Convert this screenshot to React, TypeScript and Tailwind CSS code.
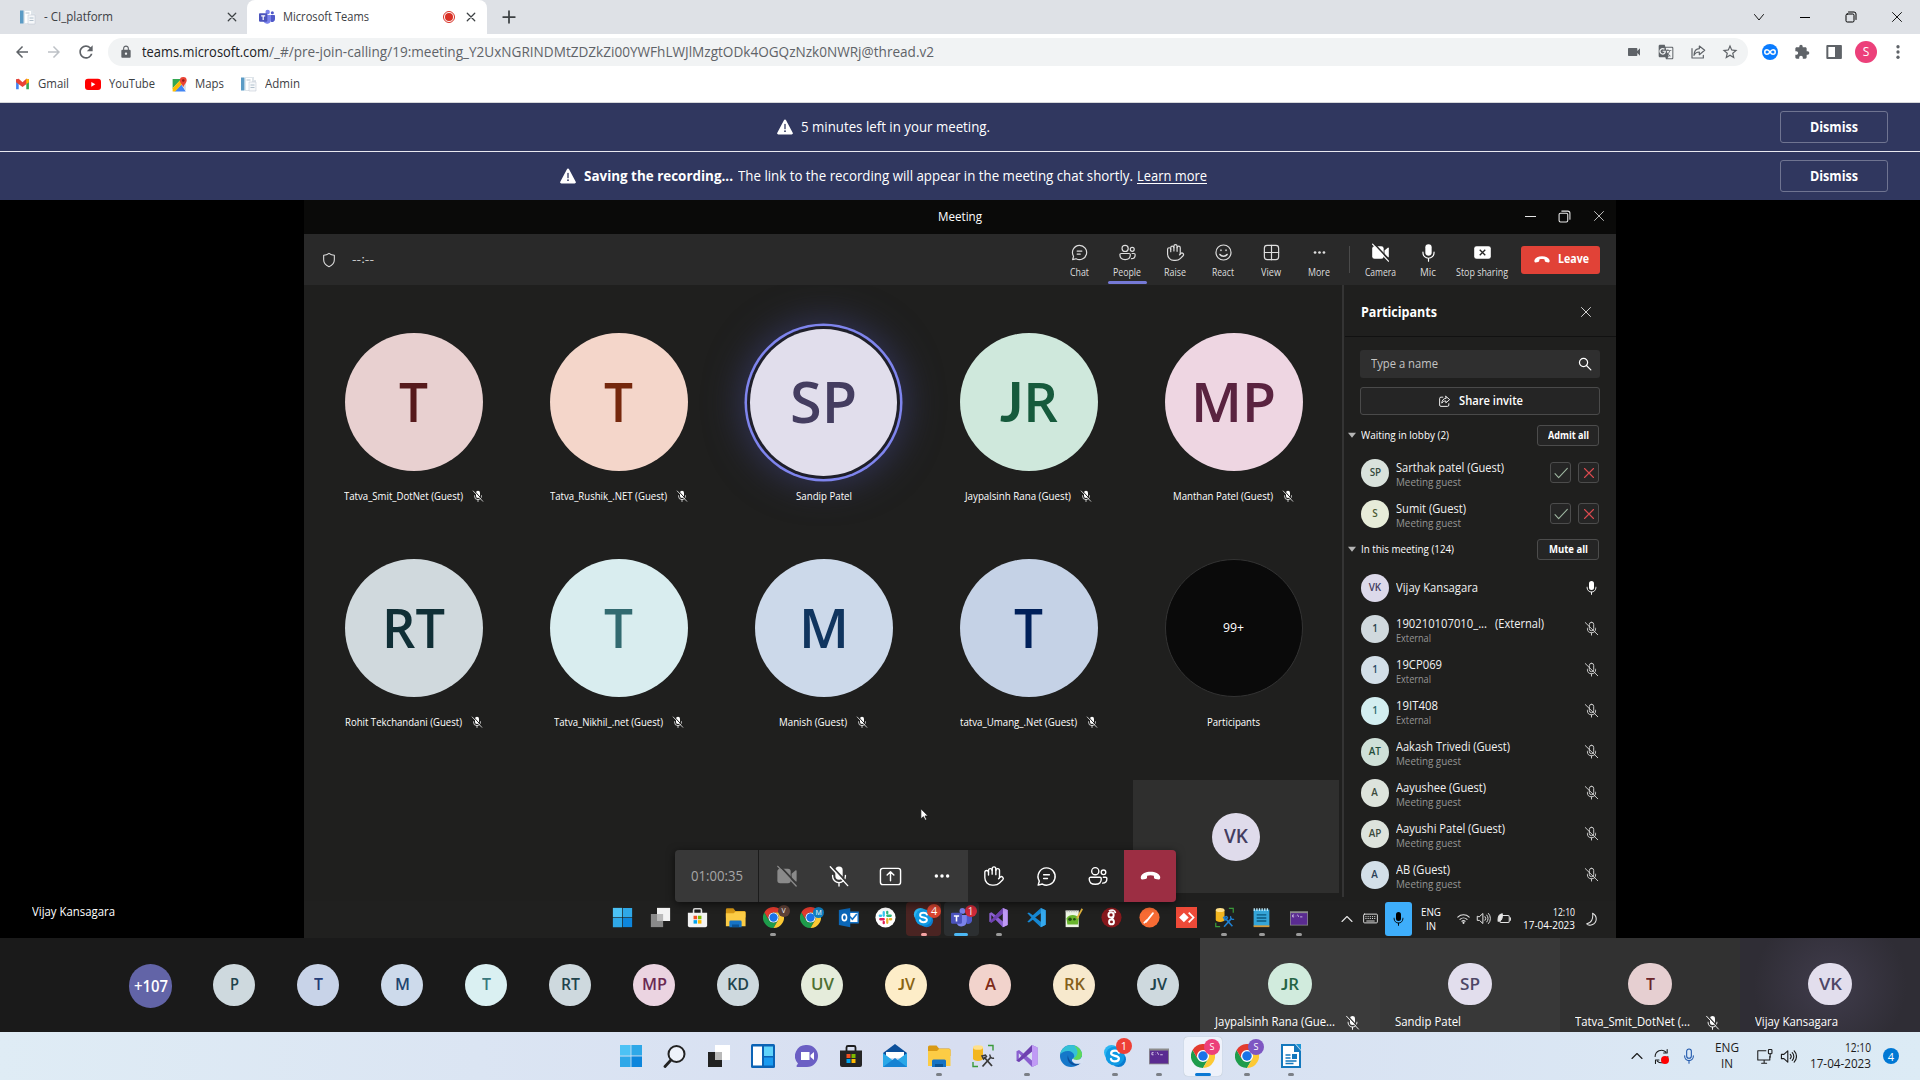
import React, { useLayoutEffect, useRef, useState } from "react";
import { Hand } from "lucide-react";
import { MdExtension, MdGTranslate, MdStarBorder, MdVideocam, MdLock, MdRefresh, MdArrowBack, MdArrowForward } from "react-icons/md";

type Kids = { children?: React.ReactNode; className?: string };

/* One line of text condensed or widened to a known width. */
function Fit({ w, className = "", children }: Kids & { w: number }) {
  const ref = useRef<HTMLSpanElement>(null);
  const [scale, setScale] = useState(1);
  useLayoutEffect(() => {
    if (ref.current) setScale(w / ref.current.getBoundingClientRect().width);
  }, []);
  return (
    <span className={`inline-flex shrink-0 ${className}`} style={{ width: w }}>
      <span ref={ref} className="shrink-0 origin-left whitespace-pre" style={{ transform: `scaleX(${scale})` }}>
        {children}
      </span>
    </span>
  );
}

/* Avatar initials; the J comes from a face whose J stays on the baseline. */
function Initials({ w, t, className = "" }: { w: number; t: string; className?: string }) {
  return (
    <Fit w={w} className={className}>
      {t.startsWith("J") ? <><span className="font-['Lato',sans-serif] font-bold">J</span>{t.slice(1)}</> : t}
    </Fit>
  );
}

function Line({ className = "size-5", sw = 1.5, children }: Kids & { sw?: number }) {
  return (
    <svg viewBox="0 0 24 24" className={`shrink-0 ${className}`} fill="none" stroke="currentColor" strokeWidth={sw} strokeLinecap="round" strokeLinejoin="round">
      {children}
    </svg>
  );
}
function Solid({ className = "size-5", vb = "0 0 24 24", children }: Kids & { vb?: string }) {
  return (
    <svg viewBox={vb} className={`shrink-0 ${className}`} fill="currentColor">
      {children}
    </svg>
  );
}

/* ---------- glyphs ---------- */
const Cross = ({ className = "size-3", sw = 1.6 }: { className?: string; sw?: number }) => (
  <Line className={className} sw={sw}><path d="M3 3l18 18M21 3L3 21" /></Line>
);
const Restore = ({ className = "size-3" }: { className?: string }) => (
  <Line className={className} sw={2}><rect x="2" y="6" width="16" height="16" rx="2.5" /><path d="M7 2h11a4 4 0 0 1 4 4v11" /></Line>
);
const ChatIcon = ({ className }: { className?: string }) => (
  <Line className={className}><path d="M12 3a9 9 0 1 1-4.3 16.9L3.3 21l1.2-4.3A9 9 0 0 1 12 3z" /><path d="M9 10.2h6M9 14h4" /></Line>
);
const PeopleIcon = ({ className }: { className?: string }) => (
  <Line className={className}>
    <circle cx="9" cy="6.8" r="3.9" /><circle cx="18" cy="8" r="2.5" />
    <path d="M4 13.3h10a1.6 1.6 0 0 1 1.6 1.6c0 4-2.6 6.1-6.6 6.1s-6.6-2.1-6.6-6.1A1.6 1.6 0 0 1 4 13.3z" />
    <path d="M17.8 13.3h2.4a1.5 1.5 0 0 1 1.5 1.5c0 3.2-1.7 5-4.7 5" />
  </Line>
);
const HandIcon = ({ className = "" }: { className?: string }) => <Hand className={`-scale-x-100 shrink-0 ${className}`} strokeWidth={1.5} />;
const MicIcon = ({ className }: { className?: string }) => (
  <Solid className={className}>
    <rect x="8" y="1.5" width="8" height="14.5" rx="4" />
    <path d="M5 11.5v.8a7 7 0 0 0 14 0v-.8M12 19.3V23" fill="none" stroke="currentColor" strokeWidth="1.5" strokeLinecap="round" />
  </Solid>
);
const MicOff = ({ className, line = "#1f1f1e" }: { className?: string; line?: string }) => (
  <Solid className={className}>
    <rect x="8" y="1.5" width="8" height="14.5" rx="4" />
    <path d="M5 11.5v.8a7 7 0 0 0 14 0v-.8M12 19.3V23" fill="none" stroke="currentColor" strokeWidth="1.5" strokeLinecap="round" />
    <path d="M4 1.2L22.5 21" stroke={line} strokeWidth="2" />
    <path d="M2.5 2L21.5 22.5" stroke="currentColor" strokeWidth="1.5" strokeLinecap="round" />
  </Solid>
);
const MicOffLine = ({ className }: { className?: string }) => (
  <Line className={className} sw={1.5}>
    <rect x="8.5" y="2" width="7" height="13.5" rx="3.5" /><path d="M5.5 11.5v.8a6.5 6.5 0 0 0 13 0v-.8M12 19v3.5M2 2.5l20 19.5" />
  </Line>
);
const CamOff = ({ className, line }: { className?: string; line: string }) => (
  <Solid className={className}>
    <rect x="1.5" y="4" width="14.5" height="16" rx="3" /><path d="M17 9.5l4.2-3.6c.6-.5 1.3-.1 1.3.6v11c0 .7-.7 1.1-1.3.6L17 14.5z" />
    <path d="M3.8.8L23.8 22" stroke={line} strokeWidth="2" /><path d="M2 1.5L22 23" stroke="currentColor" strokeWidth="1.5" strokeLinecap="round" />
  </Solid>
);
const HangUp = ({ className }: { className?: string }) => (
  <Solid className={className}><path d="M12 7c5 0 9 1.8 10 5 .5 1.7-.1 3.5-1.6 3.2l-3.2-.5c-1-.2-1.5-.9-1.6-1.9l-.1-1.5c-2.2-.7-4.8-.7-7 0l-.1 1.5c-.1 1-.6 1.700-1.600 1.900l-3.200.5C2.100 15.500 1.500 13.700 2 12c1-3.200 5-5 10-5z" /></Solid>
);
const Dots = ({ className }: { className?: string }) => (
  <Solid className={className}><circle cx="4.5" cy="12" r="2.3" /><circle cx="12" cy="12" r="2.3" /><circle cx="19.5" cy="12" r="2.3" /></Solid>
);
const ShareIcon = ({ className }: { className?: string }) => (
  <Line className={className} sw={1.7}>
    <path d="M9 4H5.500A2.500 2.500 0 0 0 3 6.500v12A2.500 2.500 0 0 0 5.500 21h12a2.500 2.500 0 0 0 2.500-2.500V16" />
    <path d="M14.500 2.500l7 6-7 6V11c-3.500 0-5.500 1-7.500 4 .3-5 3-8.500 7.500-9z" />
  </Line>
);
const Warning = () => (
  <Solid className="size-4" vb="0 0 16 16">
    <path d="M8 .6c.5 0 .9.3 1.200.8l6.500 12.300c.5.900-.1 1.800-1.100 1.800H1.400c-1 0-1.600-.9-1.100-1.800L6.800 1.400C7.100.9 7.500.6 8 .6z" />
    <path d="M8 5.500v4.200" stroke="#30375f" strokeWidth="1.3" strokeLinecap="round" /><circle cx="8" cy="12.200" r=".9" fill="#30375f" />
  </Solid>
);
const Speaker = ({ className }: { className?: string }) => (
  <Line className={className} sw={1.6}><path d="M2 9v6h3.500L11 20V4L5.500 9zM14.500 9a4.500 4.500 0 0 1 0 6M17.300 6.500a8 8 0 0 1 0 11M20 4a11.500 11.500 0 0 1 0 16" /></Line>
);
const Chevron = ({ className }: { className?: string }) => <Line className={className} sw={2.2}><path d="M2 17L12 7l10 10" /></Line>;

/* ---------- app logos ---------- */
const WinLogo = ({ className }: { className?: string }) => (
  <Solid className={className}>
    <path fill="#4cc2f5" d="M1 1h10.600v10.600H1z" /><path fill="#2fa8e8" d="M12.400 1H23v10.600H12.400zM1 12.400h10.600V23H1z" /><path fill="#0d86dc" d="M12.400 12.400H23V23H12.400z" />
  </Solid>
);
const ChromeLogo = ({ className }: { className?: string }) => (
  <Solid className={className} vb="0 0 48 48">
    <circle cx="24" cy="24" r="12" fill="#fff" />
    <path fill="#1e9c4b" d="M13.600 30L3.200 12A24 24 0 0 0 24 48l10.400-18a12 12 0 0 1-20.800 0z" />
    <path fill="#fcc934" d="M34.400 30L24 48a24 24 0 0 0 20.800-36H24a12 12 0 0 1 10.400 18z" />
    <path fill="#e33b2e" d="M24 12h20.800a24 24 0 0 0-41.600 0l10.400 18A12 12 0 0 1 24 12z" />
    <circle cx="24" cy="24" r="9.500" fill="#1a73e8" />
  </Solid>
);
const TaskView = ({ dark, className }: { dark?: boolean; className?: string }) => (
  <Solid className={className}>
    <path fill={dark ? "#222" : "#8a8a8a"} d="M1 8h14v15H1z" /><path fill={dark ? "#fff" : "#f2f2f2"} d="M8 1h15v15H8z" /><path fill="#b9b9b9" d="M8 8h7v8H8z" />
  </Solid>
);
const StoreLogo = ({ dark, className }: { dark?: boolean; className?: string }) => (
  <Solid className={className}>
    <path d="M7.500 7V3.500A1.500 1.500 0 0 1 9 2h6a1.500 1.500 0 0 1 1.500 1.500V7" fill="none" stroke={dark ? "#1d1d1d" : "#e8e8e8"} strokeWidth="1.8" />
    <path d="M1 6.500h22V21a2 2 0 0 1-2 2H3a2 2 0 0 1-2-2z" fill={dark ? "#252525" : "#f3f3f3"} />
    <path fill="#f25022" d="M7.500 10h4v4h-4z" /><path fill="#7fba00" d="M12.500 10h4v4h-4z" /><path fill="#00a4ef" d="M7.500 15h4v4h-4z" /><path fill="#ffb900" d="M12.500 15h4v4h-4z" />
  </Solid>
);
const FolderLogo = ({ className }: { className?: string }) => (
  <Solid className={className}>
    <path fill="#d99a15" d="M1 3a1.500 1.500 0 0 1 1.500-1.500h7L12 4.500h10A1.500 1.500 0 0 1 23.500 6v6H1z" />
    <path fill="#fccc45" d="M1 7h9l2-2h10a1.500 1.500 0 0 1 1.500 1.500V22H1z" /><path fill="#1673c4" d="M5 17a1.500 1.500 0 0 1 1.500-1.500h11A1.500 1.500 0 0 1 19 17v6H5z" /><path fill="#0b5394" d="M8 20h8v3H8z" />
  </Solid>
);
const SkypeLogo = ({ className }: { className?: string }) => (
  <Solid className={className}>
    <circle cx="8.500" cy="8.500" r="7.500" fill="#2cb6f2" /><circle cx="15.500" cy="15.500" r="7.500" fill="#0a7ccf" /><circle cx="12" cy="12" r="9.500" fill="#0f9ae4" />
    <path d="M16 8.700C15.300 7.200 13.800 6.600 12 6.600c-2.200 0-3.900 1-3.900 2.700 0 3.600 7.800 1.600 7.800 5.300 0 1.800-1.800 2.800-4 2.800-2 0-3.500-.8-4-2.400" fill="none" stroke="#fff" strokeWidth="2.200" strokeLinecap="round" />
  </Solid>
);
const TeamsLogo = ({ className }: { className?: string }) => (
  <Solid className={className}>
    <circle cx="13" cy="4.500" r="3.300" fill="#7b83eb" /><circle cx="20" cy="5.500" r="2.300" fill="#5059c9" />
    <path fill="#5059c9" d="M16 9h7a1 1 0 0 1 1 1v5a4.500 4.500 0 0 1-6 4.200z" /><path fill="#7b83eb" d="M7 9h11v7.500a6 6 0 0 1-11.500 2z" />
    <rect x="0" y="6.500" width="12.500" height="12.500" rx="1.200" fill="#4b53bc" /><path fill="none" stroke="#fff" strokeWidth="1.800" d="M3.300 10.200h6M6.300 10.200v6.300" />
  </Solid>
);
const VsLogo = ({ className }: { className?: string }) => (
  <Solid className={className}>
    <path fill="#8a5fd0" fillRule="evenodd" d="M17 1L8.600 9.400 4 6 1.500 7.200v9.600L4 18l4.600-3.400L17 23l5.500-2.400V3.400zM17 7.400v9.200L11.600 12zM3.800 9.200v5.600L6.500 12z" />
    <path fill="#c09af5" d="M17 1l5.500 2.400v17.200L17 23z" /><path fill="#5b2d9a" d="M1.500 16.800L4 18l4.600-3.400L17 7.400V1L8.600 9.400z" opacity=".6" />
  </Solid>
);
const CodeLogo = ({ className }: { className?: string }) => (
  <Solid className={className}>
    <path fill="#1687d2" fillRule="evenodd" d="M17 1L7.800 9.400 3.400 6.200 1.500 7.100 6.200 12l-4.700 4.900 1.900.9 4.400-3.200L17 23l5.500-2.600V3.600zM17 7.200v9.600L10.500 12z" /><path fill="#35a9ee" d="M17 1l5.500 2.600v16.800L17 23z" />
  </Solid>
);
const DbTools = ({ dark, className }: { dark?: boolean; className?: string }) => (
  <Solid className={className}>
    <path fill="#f3b61f" d="M2 3.500v11c0 1.500 2.200 2.500 5 2.500s5-1 5-2.500v-11z" /><ellipse cx="7" cy="3.500" rx="5" ry="2.300" fill="#ffe08a" />
    <path d="M17 1.500h5v5M2 18v4.500h5" stroke="#3a9a3a" strokeWidth="1.400" fill="none" />
    <path d="M13 13l8 9M20 13l-8.500 9.500" stroke={dark ? "#3a3a3a" : "#1f7fd0"} strokeWidth="1.800" fill="none" />
    <path d="M11 12l3.500-1 1 1.500-3 2.500zM19 10.500a3 3 0 0 0 4 3.500" stroke={dark ? "#3a3a3a" : "#1f7fd0"} strokeWidth="1.500" fill="none" />
  </Solid>
);
const Terminal = ({ className }: { className?: string }) => (
  <Solid className={className}><path fill="#8c8c8c" d="M0 3h24v19H0z" /><path fill="#5a2b91" d="M1 5.500h22V21H1z" /><path d="M5.500 8H3.500v2.500h2M8 8v.3M8 10v.3M10 7.500l1.500 3M13.500 10.500h3" stroke="#e9dff7" fill="none" /></Solid>
);
const EdgeLogo = ({ className }: { className?: string }) => (
  <Solid className={className}>
    <circle cx="12" cy="12" r="11" fill="#1577c9" />
    <path fill="#35c1d6" d="M1.200 10.500C2 5 6.500 1 12 1c6.500 0 11 4.500 11 9.500 0 3.500-2.500 5.500-5.500 5.500-2.200 0-3.300-.8-3.300-1.500 0-.6 1-.9 1-2.500C15.200 9 12 7 8.700 7 5.500 7 3 8.200 1.200 10.500z" />
    <path fill="#5fd85a" d="M15 1.500c5 1.500 8 5.300 8 9 0 3.500-2.500 5.500-5.500 5.500-2.200 0-3.300-.8-3.300-1.500C19.500 12 20 6 15 1.500z" />
    <path fill="#0c4f9c" d="M9 11c-2 5 2 10.500 7.500 10.500 2 0 4-.8 5-2.500-1.500 1-3 1.300-4.500 1-4-.5-8-4.500-8-9z" />
    <path fill="#d8e2f3" d="M14.200 14.500c0 .7 1.100 1.500 3.300 1.500 2.500 0 4.500-1.200 5.200-3.300L24 14v5l-2.500 0c-2 1.500-6 1-7.700-1-1.300-1.500-1-3 .4-3.500z" />
  </Solid>
);
const PageIcon = ({ className }: { className?: string }) => (
  <Solid className={className} vb="0 0 16 16">
    <path fill="#dfe5ea" d="M4 1h9v3h2v11H4z" /><path fill="#5b9bc5" d="M0 1.500h3.500v13H0z" /><path fill="#fff" d="M5 2h6v12H5z" /><path fill="#f6f8fa" stroke="#b9c3cc" strokeWidth=".5" d="M8 6h7v9H8z" /><path d="M9.500 9h4M9.500 11.500h4M5.500 4h4" stroke="#9fb0bf" strokeWidth=".8" />
  </Solid>
);

/* ---------- browser frame ---------- */
function Browser() {
  return (
    <header className="h-[103px] border-b border-[#d5d7da] bg-white text-[12.5px] text-[#3c4043]">
      <div className="flex h-[34px] items-center bg-[#dee1e6]">
        <div className="flex h-full w-[247px] items-center pl-5">
          <PageIcon className="size-4" />
          <Fit w={69} className="ml-2">- CI_platform</Fit>
          <Cross className="ml-[114px] size-2.5" sw={3} />
        </div>
        <div className="flex h-full w-[240px] items-center rounded-t-lg bg-white pl-3">
          <TeamsLogo className="size-4" />
          <Fit w={86} className="ml-2">Microsoft Teams</Fit>
          <span className="ml-[74px] flex size-3 items-center justify-center rounded-full border border-[#d93025]"><span className="size-2 rounded-full bg-[#d93025]" /></span>
          <Cross className="ml-[11px] size-2.5" sw={3} />
        </div>
        <Line className="ml-[15px] size-3.5" sw={3}><path d="M12 2v20M2 12h20" /></Line>
        <div className="ml-auto flex h-7 items-center text-black">
          <Line className="mr-[35px] size-3 rotate-180" sw={1.8}><path d="M3 17l9-11 9 11" /></Line>
          <span className="mr-[35px] h-px w-2.5 bg-black" />
          <Restore className="mr-[34px] size-3" />
          <Cross className="mr-[17px] size-3" sw={1.8} />
        </div>
      </div>
      <div className="flex h-9 items-center pl-[13px] text-[#5f6368]">
        <MdArrowBack className="size-[18px]" />
        <MdArrowForward className="ml-[14px] size-[18px] text-[#bdc1c6]" />
        <MdRefresh className="ml-[13px] size-5" />
        <div className="ml-3 flex h-7 w-[1640px] items-center rounded-full bg-[#f1f3f4] pl-[11px] text-[14px]">
          <MdLock className="size-3.5" />
          <Fit w={127} className="ml-[9px] pb-px text-[#202124]">teams.microsoft.com</Fit>
          <Fit w={665} className="pb-px">/_#/pre-join-calling/19:meeting_Y2UxNGRINDMtZDZkZi00YWFhLWJlMzgtODk4OGQzNzk0NWRj@thread.v2</Fit>
          <span className="ml-auto flex items-center gap-4 pr-2">
            <MdVideocam className="size-4" />
            <MdGTranslate className="size-4" />
            <Line className="size-4" sw={1.8}><path d="M3 7v14h17v-4" /><path d="M14 3l8 6.500-8 6.500v-4c-4 0-6.500 1.500-8 5 .3-6 3-10 8-10z" /></Line>
            <MdStarBorder className="size-[18px] -translate-x-px" />
          </span>
        </div>
        <span className="ml-3.5 flex size-4 items-center justify-center rounded-full bg-[#0a7cff]">
          <Line className="size-3 text-white" sw={3}><path d="M12 12c-2-3-3.500-4.500-6-4.500a4.500 4.500 0 0 0 0 9c2.500 0 4-1.500 6-4.500s3.500-4.500 6-4.500a4.500 4.500 0 0 1 0 9c-2.500 0-4-1.500-6-4.500z" /></Line>
        </span>
        <MdExtension className="ml-4 size-4" />
        <Line className="ml-4 size-4" sw={3}><rect x="2" y="3" width="20" height="18" /><path d="M15 3h7v18h-7z" fill="currentColor" /></Line>
        <span className="ml-[13px] flex size-[22px] items-center justify-center rounded-full bg-[#ec407a] text-[12px] text-white">S</span>
        <Solid className="ml-3 size-[18px]"><circle cx="12" cy="5" r="2.2" /><circle cx="12" cy="12" r="2.2" /><circle cx="12" cy="19" r="2.2" /></Solid>
      </div>
      <div className="flex h-7 items-center pl-[15px]">
        <Solid className="h-3.5 w-[15px]">
          <path fill="#4285f4" d="M1 4h4.500v17H1z" /><path fill="#34a853" d="M18.500 4H23v17h-4.500z" /><path fill="#ea4335" d="M1 4l4.500-1L12 9l6.500-6L23 4v5L12 17 1 9z" /><path fill="#fbbc04" d="M18.500 3L23 4v5l-4.500 3.200z" />
        </Solid>
        <Fit w={31} className="ml-2">Gmail</Fit>
        <Solid className="ml-[16px] h-4 w-4"><rect x="0" y="4" width="24" height="17" rx="4.500" fill="#f00" /><path fill="#fff" d="M9.500 9l6 3.500-6 3.500z" /></Solid>
        <Fit w={46} className="ml-2">YouTube</Fit>
        <Solid className="ml-[17px] size-[15px]">
          <path fill="#34a853" d="M1 3h14L1 18z" /><path fill="#4285f4" d="M4 23L15 12l7 11z" /><path fill="#fbbc04" d="M1 18L15 3l4 5L5 23H1z" /><path fill="#d5dbe0" d="M16 13l6-6v15z" /><path fill="#ea4335" d="M18 0a5.500 5.500 0 0 1 5.500 5.500C23.500 9 20 11 18 16c-2-5-5.500-7-5.500-10.500A5.500 5.500 0 0 1 18 0z" /><circle cx="18" cy="5.500" r="2" fill="#8c1d14" />
        </Solid>
        <Fit w={29} className="ml-2">Maps</Fit>
        <PageIcon className="ml-[17px] size-4" />
        <Fit w={35} className="ml-2">Admin</Fit>
      </div>
    </header>
  );
}

function Banner({ children, className = "" }: Kids) {
  return (
    <div className={`relative flex h-12 items-center justify-center bg-[#30375f] pr-[154px] text-[14.5px] text-white ${className}`}>
      {children}
      <button className="absolute top-2 right-8 flex h-8 w-[108px] items-center justify-center rounded-[3px] border border-[#6f7491] font-bold">
        <Fit w={48}>Dismiss</Fit>
      </button>
    </div>
  );
}

/* ---------- shared window ---------- */
function Tool({ w, label, className = "w-12", active, children }: Kids & { w: number; label: string; active?: boolean }) {
  return (
    <div className={`relative flex h-full flex-col items-center pt-[9px] ${className}`}>
      {children}
      <Fit w={w} className="mt-[3px] text-[10px] leading-[14px]">{label}</Fit>
      {active && <span className="absolute bottom-px h-[3px] w-[39px] rounded bg-[#7579d6]" />}
    </div>
  );
}

function CallToolbar() {
  return (
    <div className="flex h-[51px] items-center bg-[#292929] pr-4 pl-[17px] text-[#dedede]">
      <Line className="size-4" sw={1.6}><path d="M12 2c2.500 2 5 2.800 8 3v6.500c0 5-3 8.300-8 10.500-5-2.200-8-5.500-8-10.500V5c3-.2 5.500-1 8-3z" /></Line>
      <Fit w={22} className="ml-[15px] text-[11px]">--:--</Fit>
      <div className="ml-auto flex h-full items-center">
        <Tool w={19} label="Chat"><ChatIcon className="size-[19px]" /></Tool>
        <Tool w={28} label="People" active><PeopleIcon className="size-[19px]" /></Tool>
        <Tool w={22} label="Raise"><HandIcon className="size-[19px]" /></Tool>
        <Tool w={22} label="React"><Line className="size-[19px]"><circle cx="12" cy="12" r="9.500" /><path d="M7.500 14.500c2 3 7 3 9 0M8.800 9v.5M15.200 9v.5" strokeWidth="1.900" /></Line></Tool>
        <Tool w={20} label="View"><Line className="size-[19px]"><rect x="3" y="3" width="18" height="18" rx="3.5" /><path d="M12 3v18M3 12h18" /></Line></Tool>
        <Tool w={22} label="More"><Dots className="size-[19px] scale-75" /></Tool>
        <span className="ml-1.5 h-[27px] w-px bg-[#4a4a4a]" />
        <Tool w={31} label="Camera" className="ml-[6px] w-12"><CamOff className="size-[19px] text-white" line="#292929" /></Tool>
        <Tool w={16} label="Mic"><MicIcon className="size-[19px] text-white" /></Tool>
        <Tool w={52} label="Stop sharing" className="w-[60px]"><Solid className="size-[19px] text-white"><rect x="1.500" y="4" width="21" height="16" rx="3" /><path d="M8.500 8.500l7 7M15.500 8.500l-7 7" stroke="#292929" strokeWidth="1.7" /></Solid></Tool>
        <button className="ml-[9px] flex h-7 w-[79px] items-center justify-center gap-[7px] rounded-[3px] bg-[#e14237] text-[12.5px] font-bold text-white">
          <HangUp className="size-[18px]" /><Fit w={31}>Leave</Fit>
        </button>
      </div>
    </div>
  );
}

type P = { t: string; n: string; w: number; c: string; tw: number; muted?: boolean };
const tiles: P[] = [
  { t: "T", n: "Tatva_Smit_DotNet (Guest)", w: 119, tw: 29, muted: true, c: "bg-[#e8d0d0] text-[#561a1c]" },
  { t: "T", n: "Tatva_Rushik_.NET (Guest)", w: 117, tw: 29, muted: true, c: "bg-[#f4d6ca] text-[#75280d]" },
  { t: "SP", n: "Sandip Patel", w: 56, tw: 67, c: "bg-[#e1deec] text-[#443d60]" },
  { t: "JR", n: "Jaypalsinh Rana (Guest)", w: 106, tw: 58, muted: true, c: "bg-[#cfe8dc] text-[#165a3c]" },
  { t: "MP", n: "Manthan Patel (Guest)", w: 100, tw: 85, muted: true, c: "bg-[#eed6e2] text-[#5a2340]" },
  { t: "RT", n: "Rohit Tekchandani (Guest)", w: 117, tw: 63, muted: true, c: "bg-[#d0d9dd] text-[#102f36]" },
  { t: "T", n: "Tatva_Nikhil_.net (Guest)", w: 109, tw: 29, muted: true, c: "bg-[#d9edef] text-[#326a70]" },
  { t: "M", n: "Manish (Guest)", w: 68, tw: 50, muted: true, c: "bg-[#ccd9ea] text-[#10355f]" },
  { t: "T", n: "tatva_Umang_.Net (Guest)", w: 117, tw: 29, muted: true, c: "bg-[#c5d2e6] text-[#00205a]" },
];

function Gallery() {
  return (
    <div className="grid w-[1038px] grid-cols-[repeat(5,205px)] content-start pt-12 pl-[7px] text-white">
      {tiles.map((p) => {
        const speaking = p.t === "SP";
        return (
          <div key={p.n} className="flex h-[226px] flex-col items-center">
            <div className="flex h-[138px] items-center justify-center">
              <div className={`flex shrink-0 items-center justify-center rounded-full pb-[3px] font-semibold ${p.c} ${speaking ? "size-[147px] text-[58px] shadow-[0_0_0_3px_#1f1f2a,0_0_0_5.5px_#7f85ee,0_0_36px_8px_#33355a]" : "size-[138px] text-[55px]"}`}>
                <Initials w={p.tw} className="leading-none" t={p.t} />
              </div>
            </div>
            <div className="mt-[15px] flex h-5 items-center gap-[9px] text-[11px]">
              <Fit w={p.w}>{p.n}</Fit>
              {p.muted && <MicOff className="size-3" />}
            </div>
          </div>
        );
      })}
      <div className="flex flex-col items-center">
        <div className="flex size-[138px] items-center justify-center rounded-full border border-[#333] bg-[#0a0a0a] text-[12px]"><Fit w={21}>99+</Fit></div>
        <Fit w={53} className="mt-[15px] items-center text-[11px] leading-5">Participants</Fit>
      </div>
    </div>
  );
}

type Row = { t: string; n: string; w: number; sub?: string; c: string; lobby?: boolean; extra?: string };
const lobby: Row[] = [
  { t: "SP", n: "Sarthak patel (Guest)", w: 108, sub: "Meeting guest", c: "bg-[#d9e2dc] text-[#35493d]", lobby: true },
  { t: "S", n: "Sumit (Guest)", w: 70, sub: "Meeting guest", c: "bg-[#e7ecd9] text-[#4c5a33]", lobby: true },
];
const inMeeting: Row[] = [
  { t: "VK", n: "Vijay Kansagara", w: 82, c: "bg-[#dcd9ea] text-[#443d60]" },
  { t: "1", n: "190210107010_...", w: 91, extra: "(External)", sub: "External", c: "bg-[#d0d9dd] text-[#2a444c]" },
  { t: "1", n: "19CP069", w: 46, sub: "External", c: "bg-[#d3dfe8] text-[#2b4b66]" },
  { t: "1", n: "19IT408", w: 42, sub: "External", c: "bg-[#d3eef0] text-[#2f686e]" },
  { t: "AT", n: "Aakash Trivedi (Guest)", w: 114, sub: "Meeting guest", c: "bg-[#cfe0d8] text-[#1f4d3a]" },
  { t: "A", n: "Aayushee (Guest)", w: 90, sub: "Meeting guest", c: "bg-[#dde3dc] text-[#3a4a3c]" },
  { t: "AP", n: "Aayushi Patel (Guest)", w: 109, sub: "Meeting guest", c: "bg-[#dde3dc] text-[#3a4a3c]" },
  { t: "A", n: "AB (Guest)", w: 54, sub: "Meeting guest", c: "bg-[#d3dfe8] text-[#2b3f56]" },
];

function Person({ r }: { r: Row }) {
  return (
    <div className="flex h-[41px] items-center pr-4 pl-4">
      <span className={`flex size-7 shrink-0 items-center justify-center rounded-full text-[11px] font-semibold ${r.c}`}><span className="scale-x-90">{r.t}</span></span>
      <div className={`ml-[7px] flex flex-col text-[12.5px] leading-[15px] text-[#f2f2f2] ${r.sub ? "pt-[3px]" : ""}`}>
        <span className="flex gap-2"><Fit w={r.w}>{r.n}</Fit>{r.extra && <Fit w={49}>{r.extra}</Fit>}</span>
        {r.sub && <Fit w={r.sub === "External" ? 35 : 65} className="text-[10.5px] leading-[14px] text-[#959595]">{r.sub}</Fit>}
      </div>
      <div className="ml-auto flex items-center gap-[7px]">
        {r.lobby ? (
          <>
            <span className="flex size-[21px] items-center justify-center rounded-[3px] border border-[#4c4c4c] bg-[#252525] text-[#9fb8a2]"><Line className="size-4" sw={1.6}><path d="M3 13l5.500 6L21.500 5" /></Line></span>
            <span className="mr-px flex size-[21px] items-center justify-center rounded-[3px] border border-[#4c4c4c] bg-[#252525] text-[#dc4a4f]"><Cross className="size-3" sw={2.2} /></span>
          </>
        ) : r.sub ? <MicOffLine className="mr-px size-[15px] text-[#d4d4d4]" /> : <MicIcon className="mr-px size-[15px] text-white" />}
      </div>
    </div>
  );
}

function Section({ w, label, bw, action, className = "" }: { w: number; label: string; bw: number; action: string; className?: string }) {
  return (
    <div className={`flex h-[22px] items-center pr-[17px] pl-[3px] text-white ${className}`}>
      <Solid className="mr-[5px] size-2 text-[#b5b5b5]"><path d="M0 5h24L12 20z" /></Solid>
      <Fit w={w} className="text-[11px]">{label}</Fit>
      <span className="ml-auto flex h-[21px] w-[62px] items-center justify-center rounded-[3px] border border-[#4c4c4c] bg-[#252525] text-[11px] font-bold"><Fit w={bw}>{action}</Fit></span>
    </div>
  );
}

function Panel() {
  return (
    <aside className="h-[612px] w-[274px] border-l-2 border-[#343434] pl-px text-white">
      <div className="flex h-[52px] items-center border-b border-[#111] pt-0.5 pr-6 pl-4">
        <Fit w={76} className="text-[14px] font-bold">Participants</Fit>
        <Cross className="ml-auto size-3" sw={1.6} />
      </div>
      <div className="mt-[13px] ml-[15px] flex h-7 w-[240px] items-center rounded-[3px] bg-[#2f2f2f] pr-2 pl-[11px] text-[12.5px] text-[#c4c4c4]">
        <Fit w={67}>Type a name</Fit>
        <Line className="ml-auto size-[14px] text-white" sw={2.1}><circle cx="9.500" cy="9.500" r="7" /><path d="M14.500 14.500L22 22" /></Line>
      </div>
      <div className="mt-[9px] ml-[15px] flex h-7 w-[240px] items-center justify-center gap-2 rounded-[3px] border border-[#4a4a4a] bg-[#252525] text-[12.5px] font-semibold">
        <ShareIcon className="size-[13px]" /><Fit w={64}>Share invite</Fit>
      </div>
      <Section w={88} label="Waiting in lobby (2)" bw={41} action="Admit all" className="mt-[9px]" />
      <div className="mt-[6px]">{lobby.map((r) => <Person key={r.n} r={r} />)}</div>
      <Section w={93} label="In this meeting (124)" bw={39} action="Mute all" className="mt-[4px]" />
      <div className="mt-[7px]">{inMeeting.map((r) => <Person key={r.n} r={r} />)}</div>
    </aside>
  );
}

function CallControls() {
  return (
    <div className="absolute top-[650px] left-[371px] flex h-[52px] overflow-hidden rounded shadow-[0_2px_8px_#0009]">
      <div className="flex w-[84px] items-center justify-center border-r border-[#1b1b1b] bg-[#383838] pb-px text-[14px] font-medium text-[#a6a6a6]"><Fit w={52}>01:00:35</Fit></div>
      <div className="grid w-[209px] grid-cols-4 place-items-center bg-[#383838] pl-0.5 text-white">
        <CamOff className="size-[22px] text-[#8a8a8a]" line="#383838" />
        <MicOff className="size-[22px]" line="#383838" />
        <Line className="size-[23px]"><rect x="1.500" y="3.500" width="21" height="17" rx="2.5" /><path d="M12 16.500v-9M8.500 10.500L12 7l3.500 3.500" /></Line>
        <Dots className="size-[18px]" />
      </div>
      <div className="grid w-[156px] grid-cols-3 place-items-center bg-[#252525] text-white">
        <HandIcon className="size-[22px]" /><ChatIcon className="size-[23px]" /><PeopleIcon className="size-[22px]" />
      </div>
      <div className="flex w-[52px] items-center justify-center bg-[#9c2e43] text-white"><HangUp className="size-[23px]" /></div>
    </div>
  );
}

function Badge({ className, children }: Kids) {
  return <span className={`absolute flex items-center justify-center rounded-full leading-none text-white ${className}`}>{children}</span>;
}

const s = "size-[21px]";
const innerApps: { k: string; el: React.ReactNode; badge?: React.ReactNode; dot?: string; bg?: string }[] = [
  { k: "start", el: <WinLogo className={s} /> },
  { k: "view", el: <TaskView className={s} /> },
  { k: "store", el: <StoreLogo className={s} /> },
  { k: "files", el: <FolderLogo className={s} /> },
  { k: "chrome1", el: <ChromeLogo className={s} />, badge: <Badge className="top-[3px] right-px size-3 bg-[#5d4037] text-[7px]">V</Badge>, dot: "w-1.5 bg-[#9a9a9a]" },
  { k: "chrome2", el: <ChromeLogo className={s} />, badge: <Badge className="top-[5px] right-1 size-[11px] bg-[#0f7fc0] text-[7px]">M</Badge> },
  { k: "outlook", el: <Solid className={s}><path fill="#fff" stroke="#1272c8" strokeWidth="1.500" d="M11 6h12v12H11z" /><path d="M13.500 11l3 3 5-6" stroke="#1272c8" strokeWidth="1.800" fill="none" /><path fill="#0b67b8" d="M1 3.500L14 1v22L1 20.500z" /><ellipse cx="7.300" cy="12" rx="2.500" ry="3.600" fill="none" stroke="#fff" strokeWidth="1.800" /></Solid> },
  { k: "slack", el: <Solid className={s}><circle cx="12" cy="12" r="11.500" fill="#fff" /><g strokeWidth="2.600" strokeLinecap="round"><path stroke="#36c5f0" d="M10 6v4M5.500 10H7" /><path stroke="#2eb67d" d="M14 10h4M14 5.500V7" /><path stroke="#ecb22e" d="M14 14v4M17 14h1.500" /><path stroke="#e01e5a" d="M10 14H6M10 17v1.500" /></g></Solid> },
  { k: "skype", el: <SkypeLogo className={s} />, badge: <Badge className="top-0.5 right-0 size-[14px] bg-[#d8442f] text-[11px]">4</Badge>, dot: "w-1.5 bg-[#f5a3a3]", bg: "bg-[#4a2422]" },
  { k: "teams", el: <TeamsLogo className={s} />, badge: <Badge className="top-[3px] right-0.5 size-3 bg-[#d02a3a] text-[10px]">1</Badge>, dot: "w-[14px] bg-[#4cb8f5]", bg: "bg-[#2c2f31]" },
  { k: "vs", el: <VsLogo className={s} />, dot: "w-1.5 bg-[#9a9a9a]" },
  { k: "code", el: <CodeLogo className={s} /> },
  { k: "npp", el: <Solid className={s}><path fill="#eef5e6" d="M3 4h15v19H3z" /><path stroke="#bbb" d="M3 5h15" strokeDasharray="1 1" strokeWidth="2" /><path fill="#69b52d" d="M4 13c3-5 11-5 14 0l-1 7H5z" /><circle cx="8" cy="14" r="2" fill="#234d12" /><circle cx="13" cy="14" r="1.500" fill="#234d12" /><path stroke="#e0b23c" strokeWidth="2" d="M22 2l-6 11" /></Solid> },
  { k: "wg", el: <Solid className={s}><circle cx="12" cy="12" r="11.500" fill="#86181c" /><circle cx="11.500" cy="9" r="3" fill="none" stroke="#fff" strokeWidth="2.200" /><circle cx="12" cy="17" r="2.800" fill="none" stroke="#fff" strokeWidth="2.200" /><path fill="none" stroke="#fff" strokeWidth="2" d="M9 4.500c4-2 7-1 7.500 2.500M14.500 11.500L12 14" /></Solid> },
  { k: "postman", el: <Solid className={s}><circle cx="12" cy="12" r="11.500" fill="#f76b34" /><path stroke="#fff" strokeWidth="2" strokeLinecap="round" d="M8 17l8-10M9 15l-3 3" /></Solid> },
  { k: "anydesk", el: <Solid className={s}><path fill="#ee4a38" d="M0 0h24v24H0z" /><path fill="#fff" d="M9 6.500l5.500 5.500L9 17.500 3.500 12z" /><path stroke="#fff" strokeWidth="2" fill="none" d="M14.500 6.500L20 12l-5.500 5.500" /></Solid> },
  { k: "ssms", el: <DbTools className={s} />, dot: "w-1.5 bg-[#9a9a9a]" },
  { k: "notepad", el: <Solid className={s}><path fill="#35a5d8" d="M3 3h18v19H3z" /><path fill="#d79a3a" d="M3 21h18v2H3z" /><path stroke="#0b587f" strokeWidth="1.600" d="M6.500 9h11M6.500 12.500h11M6.500 16h11" /><path stroke="#bfe8f8" strokeWidth="3" strokeDasharray="1.500 1.500" d="M3 3h18" /></Solid>, dot: "w-1.5 bg-[#9a9a9a]" },
  { k: "cmd", el: <Terminal className="size-[18px]" />, dot: "w-1.5 bg-[#9a9a9a]" },
];

function InnerTaskbar() {
  return (
    <div className="flex h-[37px] items-center bg-[#20201f] pb-0.5 pl-[300px] text-[#e4e4e4]">
      {innerApps.map((a) => (
        <div key={a.k} className={`relative mx-[1.3px] flex h-[34px] w-[35px] items-center justify-center rounded pb-0.5 ${a.bg ?? ""}`}>
          {a.el}{a.badge}
          {a.dot && <span className={`absolute bottom-0 h-[3px] rounded-full ${a.dot}`} />}
        </div>
      ))}
      <Chevron className="ml-[23px] size-3" />
      <Line className="ml-[10px] size-[15px]"><rect x="1" y="5" width="22" height="14" rx="1.5" /><path d="M4.500 9h.5M8 9h.5M11.500 9h.5M15 9h.5M18.500 9h.5M4.500 12h.5M8 12h.5M11.500 12h.5M15 12h.5M18.500 12h.5M6 16h12" /></Line>
      <span className="ml-[7px] flex h-[34px] w-[27px] items-center justify-center rounded-[3px] bg-[#3eaefb] text-black"><MicIcon className="size-[15px]" /></span>
      <div className="ml-[9px] flex flex-col items-center text-[10.5px] leading-[14px] text-white"><Fit w={20}>ENG</Fit><Fit w={10}>IN</Fit></div>
      <Line className="ml-[16px] size-[13px]" sw={2}><path d="M1.500 9.500a15 15 0 0 1 21 0M5.500 13.500a9.500 9.500 0 0 1 13 0M9 17a5 5 0 0 1 6 0" /><circle cx="12" cy="20" r="1" fill="currentColor" /></Line>
      <Speaker className="ml-[6px] size-[15px]" />
      <Line className="ml-[6px] size-[14px]" sw={1.8}><rect x="5" y="6" width="16" height="12" rx="2" /><path d="M23 10v4" /><path d="M9 3C4 4 1 8 2 16c5 0 8-5 7-13z" fill="currentColor" /></Line>
      <div className="ml-[12px] flex flex-col items-end text-[10.5px] leading-[13px] text-white"><Fit w={22}>12:10</Fit><Fit w={52}>17-04-2023</Fit></div>
      <Line className="ml-[10px] size-[14px]" sw={1.8}><path d="M13 2c8 4 9 16-1 20-4 1.500-8 0-9-2 8-1 11.500-9 10-18z" /></Line>
    </div>
  );
}

function SharedScreen() {
  return (
    <div className="relative h-[738px] w-[1312px] bg-[#1f1f1e]">
      <div className="flex h-[34px] items-center bg-[#0a0a09] text-white">
        <Fit w={44} className="ml-[634px] text-[12px]">Meeting</Fit>
        <div className="mr-[11px] ml-auto flex items-center gap-[22px] pb-0.5 text-[#e6e6e6]"><span className="h-px w-[11px] bg-[#e6e6e6]" /><Restore className="size-[13px]" /><Cross className="size-[12px]" /></div>
      </div>
      <CallToolbar />
      <div className="flex h-[616px] overflow-hidden"><Gallery /><Panel /></div>
      <InnerTaskbar />
      <div className="absolute top-[580px] left-[829px] flex h-[113px] w-[206px] items-center justify-center bg-[#2f2f2e]">
        <span className="flex size-12 items-center justify-center rounded-full bg-[#dfdbeb] pb-px text-[19px] font-semibold text-[#443d60]"><Fit w={24}>VK</Fit></span>
      </div>
      <CallControls />
      <svg viewBox="0 0 12 18" className="absolute top-[608px] left-[616px] h-[13px] w-[9px]"><path d="M1 1v14l3.500-3 2.500 5 2-1-2.300-5H11z" fill="#fff" stroke="#111" /></svg>
    </div>
  );
}

/* ---------- participant strip ---------- */
const strip: { t: string; w: number; c: string }[] = [
  { t: "P", w: 9, c: "bg-[#ced9de] text-[#21434b]" },
  { t: "T", w: 9, c: "bg-[#c8d3e8] text-[#243c77]" },
  { t: "M", w: 15, c: "bg-[#cddaeb] text-[#1f4570]" },
  { t: "T", w: 9, c: "bg-[#daf0f2] text-[#39787d]" },
  { t: "RT", w: 19, c: "bg-[#ced9de] text-[#21434b]" },
  { t: "MP", w: 25, c: "bg-[#ebd4e1] text-[#6a2a52]" },
  { t: "KD", w: 22, c: "bg-[#ced9de] text-[#21434b]" },
  { t: "UV", w: 23, c: "bg-[#e5ecdb] text-[#4f7032]" },
  { t: "JV", w: 17, c: "bg-[#fdedc8] text-[#8a6512]" },
  { t: "A", w: 11, c: "bg-[#f2d3cc] text-[#7d2b18]" },
  { t: "RK", w: 21, c: "bg-[#f7e9cd] text-[#84601a]" },
  { t: "JV", w: 17, c: "bg-[#ced9de] text-[#21434b]" },
];
const videos = [
  { t: "JR", tw: 18, n: "Jaypalsinh Rana (Gue...", w: 120, muted: true, bg: "bg-[#3b3b3b]", c: "bg-[#d1ebdd] text-[#256445]" },
  { t: "SP", tw: 20, n: "Sandip Patel", w: 66, muted: false, bg: "bg-[#383838]", c: "bg-[#e2deed] text-[#4e4766]" },
  { t: "T", tw: 9, n: "Tatva_Smit_DotNet (...", w: 115, muted: true, bg: "bg-[#313131]", c: "bg-[#e6cfd1] text-[#6b2529]" },
  { t: "VK", tw: 23, n: "Vijay Kansagara", w: 83, muted: false, bg: "bg-[radial-gradient(circle,#403c4c_0%,#2f2d35_75%)]", c: "bg-[#e2deed] text-[#4e4766]" },
];

function Strip() {
  return (
    <div className="flex h-[94px] bg-[#1a1a1a] text-white">
      <div className="flex w-[1200px] items-center pl-[129px]">
        <span className="mt-0.5 mr-5 flex size-11 items-center justify-center rounded-full bg-[#6264a7] text-[16px] font-semibold"><Fit w={34}>+107</Fit></span>
        <div className="flex">
          {strip.map((p, i) => (
            <div key={i} className="flex w-[84px] justify-center"><span className={`flex size-[42px] items-center justify-center rounded-full text-[15.5px] font-semibold ${p.c}`}><Initials w={p.w} t={p.t} /></span></div>
          ))}
        </div>
      </div>
      {videos.map((v) => (
        <div key={v.n} className={`flex w-[180px] flex-col items-center pt-[25px] ${v.bg}`}>
          <span className={`flex size-11 items-center justify-center rounded-full text-[16px] font-semibold ${v.c}`}><Initials w={v.tw} t={v.t} /></span>
          <div className="mt-[7px] flex w-full items-center pr-[19px] pl-[15px] text-[12.5px] leading-[20px]"><Fit w={v.w}>{v.n}</Fit>{v.muted && <MicOff className="mr-px ml-auto size-[15px]" line="#363636" />}</div>
        </div>
      ))}
    </div>
  );
}

/* ---------- desktop taskbar ---------- */
const o = "size-6";
const grey = "w-1.5 bg-[#7b7f86]";
const apps: { k: string; el: React.ReactNode; badge?: React.ReactNode; dot?: string; bg?: string }[] = [
  { k: "start", el: <WinLogo className={o} /> },
  { k: "search", el: <Line className="size-6 -scale-x-100 text-[#222]" sw={2}><circle cx="10.500" cy="10" r="8" fill="#eef2fa" /><path d="M16 16l6 6.500" strokeWidth="2.800" /></Line> },
  { k: "view", el: <TaskView dark className={o} /> },
  { k: "widgets", el: <Solid className={o}><rect width="24" height="24" rx="1.500" fill="#0b63b5" /><path fill="#fff" d="M2 2.500h9v19H2z" /><path fill="#61d4fb" d="M13 2.500h9v9.500h-9z" /><path fill="#1a9bf0" d="M13 13.500h9v8h-9z" /></Solid> },
  { k: "meet", el: <Solid className={o}><path fill="#6b5fc4" d="M12 1a11 11 0 0 1 0 22H2.500a1 1 0 0 1-.8-1.600L3 19.500A11 11 0 0 1 12 1z" /><path fill="#fff" d="M6 8h8.500v8H6zM15.500 11L19 8v8l-3.500-3z" /></Solid> },
  { k: "store", el: <StoreLogo dark className={o} /> },
  { k: "mail", el: <Solid className={o}><path fill="#0c4f9a" d="M12 0l12 9v3H0V9z" /><path fill="#fff" d="M3 8h18v6H3z" /><path fill="#2aa8e8" d="M0 9l12 9 12-9v14H0z" /><path fill="#1683d3" d="M0 23l12-9 12 9z" /></Solid> },
  { k: "files", el: <FolderLogo className={o} />, dot: grey },
  { k: "ssms", el: <DbTools dark className={o} /> },
  { k: "vs", el: <VsLogo className={o} />, dot: grey },
  { k: "edge", el: <EdgeLogo className={o} /> },
  { k: "skype", el: <SkypeLogo className={o} />, badge: <Badge className="top-px right-0.5 size-4 bg-[#ee4036] text-[11px]">1</Badge>, dot: grey },
  { k: "cmd", el: <Terminal className="h-5 w-[22px]" />, dot: grey },
  { k: "chrome1", el: <ChromeLogo className={o} />, badge: <Badge className="top-0.5 right-0.5 size-4 bg-[#ec407a] text-[9px]">S</Badge>, dot: "w-4 bg-[#0b78d4]", bg: "bg-[#eef2fb] shadow-[0_0_1px_#9aa]" },
  { k: "chrome2", el: <ChromeLogo className={o} />, badge: <Badge className="top-0.5 right-0.5 size-4 bg-[#7e57c2] text-[9px]">S</Badge>, dot: grey },
  { k: "writer", el: <Solid className={o}><path fill="#1478bd" d="M2 0h14l6 7v17H2z" /><path fill="#fff" d="M4 2h11v6h5v14H4z" /><path fill="#1c96d6" d="M17 0h5v6z" /><path d="M6.500 11h5M6.500 14h5M6.500 17h11M6.500 19.500h8" stroke="#1478bd" strokeWidth="1.300" /><path fill="#1478bd" d="M13 10h5v5h-5z" /></Solid>, dot: grey },
];

function Taskbar() {
  return (
    <div className="flex h-12 items-center bg-linear-to-r from-[#dfecf5] via-[#d7def1] to-[#dcebf5] pl-[609px] text-[#1b1b1b]">
      {apps.map((a) => (
        <div key={a.k} className="flex h-full w-11 items-center justify-center">
          <div className={`relative flex h-[39px] w-[38px] items-center justify-center rounded ${a.bg ?? ""}`}>
            {a.el}{a.badge}
            {a.dot && <span className={`absolute bottom-0 h-[3px] rounded-full ${a.dot}`} />}
          </div>
        </div>
      ))}
      <Chevron className="ml-[318px] size-3" />
      <span className="relative ml-[10px] flex size-4 items-center justify-center"><Line className="size-[17px]"><path d="M3 12a9 9 0 0 1 15-6.500M20 2v5h-5M21 12a9 9 0 0 1-15 6.500M3.500 22v-5h5" /></Line><span className="absolute right-0 bottom-0 size-2 rounded-full bg-[#f00]" /></span>
      <Line className="ml-3 size-4 text-[#1c55ab]" sw={1.6}><rect x="8.500" y="1.500" width="7" height="14" rx="3.5" /><path d="M5.500 11.500v.8a6.500 6.500 0 0 0 13 0v-.8M12 19v4" /></Line>
      <div className="ml-[18px] flex flex-col items-center text-[12px] leading-4"><Fit w={24}>ENG</Fit><Fit w={12}>IN</Fit></div>
      <Line className="ml-[17px] size-[17px]"><path d="M14 4H2.500v13h17v-5M8 21.500h7M11.500 17v4.500" /><rect x="17.500" y="2" width="5" height="6" rx="1" /><path d="M20 8v5" /></Line>
      <Speaker className="ml-[7px] size-[17px]" />
      <div className="ml-[13px] flex flex-col items-end text-[12px] leading-4"><Fit w={26}>12:10</Fit><Fit w={61}>17-04-2023</Fit></div>
      <span className="ml-[12px] flex size-4 items-center justify-center rounded-full bg-[#0078d4] text-[11px] leading-none text-white">4</span>
    </div>
  );
}

export default function App() {
  return (
    <div className="h-[1080px] w-[1920px] overflow-hidden bg-black font-['Open_Sans','Noto_Sans',sans-serif]">
      <Browser />
      <Banner><Warning /><Fit w={189} className="ml-2">5 minutes left in your meeting.</Fit></Banner>
      <Banner className="h-[49px] border-t border-[#e8e8ef]">
        <Warning />
        <Fit w={149} className="mr-[5px] ml-2 font-bold">Saving the recording...</Fit>
        <Fit w={395}>The link to the recording will appear in the meeting chat shortly.</Fit>
        <Fit w={70} className="ml-1 underline underline-offset-2">Learn more</Fit>
      </Banner>
      <main className="flex h-[738px]">
        <div className="flex w-[304px] items-end pb-4 pl-8 text-[12.5px] leading-5 text-white"><Fit w={83}>Vijay Kansagara</Fit></div>
        <SharedScreen />
      </main>
      <Strip />
      <Taskbar />
    </div>
  );
}
